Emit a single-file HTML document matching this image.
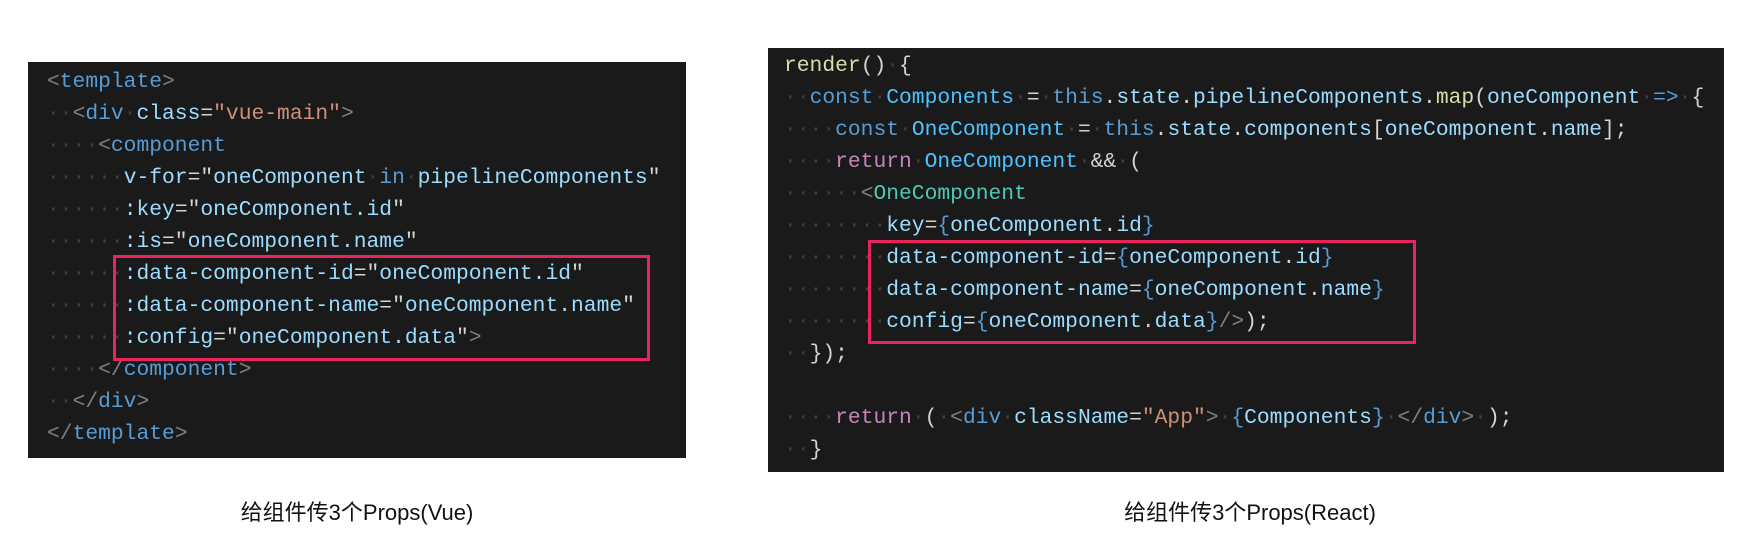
<!DOCTYPE html>
<html><head><meta charset="utf-8"><style>
html,body{margin:0;padding:0;background:#fff;width:1748px;height:558px;overflow:hidden;position:relative}
.panel{position:absolute;background:#1a1a1a}
.code{position:absolute;font-family:"Liberation Mono",monospace;font-size:21.3px;line-height:32px;white-space:normal;color:#d4d4d4}
.code div{height:32px;white-space:pre}
.d{color:#3e3e3e}
.g{color:#808080}
.t{color:#569cd6}
.a{color:#9cdcfe}
.s{color:#ce9178}
.k{color:#c586c0}
.f{color:#dcdcaa}
.c{color:#4ec9b0}
.v{color:#4fc1ff}
.b{color:#569cd6}
.w{color:#d4d4d4}
.box{position:absolute;border:3px solid #e8245f;box-sizing:border-box}
.cap{position:absolute;font-family:"Liberation Sans","Noto Sans CJK SC",sans-serif;font-size:22px;color:#111;transform:translateX(-50%);white-space:nowrap}
</style></head><body>
<div class="panel" style="left:28px;top:62px;width:658px;height:396px"></div>
<div class="code" style="left:47px;top:66px">
<div><span class="g">&lt;</span><span class="t">template</span><span class="g">&gt;</span></div>
<div><span class="d">··</span><span class="g">&lt;</span><span class="t">div</span><span class="d">·</span><span class="a">class</span><span class="w">=</span><span class="s">"vue-main"</span><span class="g">&gt;</span></div>
<div><span class="d">····</span><span class="g">&lt;</span><span class="t">component</span></div>
<div><span class="d">······</span><span class="a">v-for</span><span class="w">=</span><span class="w">"</span><span class="a">oneComponent</span><span class="d">·</span><span class="t">in</span><span class="d">·</span><span class="a">pipelineComponents</span><span class="w">"</span></div>
<div><span class="d">······</span><span class="a">:key</span><span class="w">="</span><span class="a">oneComponent.id</span><span class="w">"</span></div>
<div><span class="d">······</span><span class="a">:is</span><span class="w">="</span><span class="a">oneComponent.name</span><span class="w">"</span></div>
<div><span class="d">······</span><span class="a">:data-component-id</span><span class="w">="</span><span class="a">oneComponent.id</span><span class="w">"</span></div>
<div><span class="d">······</span><span class="a">:data-component-name</span><span class="w">="</span><span class="a">oneComponent.name</span><span class="w">"</span></div>
<div><span class="d">······</span><span class="a">:config</span><span class="w">="</span><span class="a">oneComponent.data</span><span class="w">"</span><span class="g">&gt;</span></div>
<div><span class="d">····</span><span class="g">&lt;/</span><span class="t">component</span><span class="g">&gt;</span></div>
<div><span class="d">··</span><span class="g">&lt;/</span><span class="t">div</span><span class="g">&gt;</span></div>
<div><span class="g">&lt;/</span><span class="t">template</span><span class="g">&gt;</span></div>
</div>
<div class="box" style="left:113px;top:255px;width:537px;height:106px"></div>

<div class="panel" style="left:768px;top:48px;width:956px;height:424px"></div>
<div class="code" style="left:784px;top:50px">
<div><span class="f">render</span><span class="w">()</span><span class="d">·</span><span class="w">{</span></div>
<div><span class="d">··</span><span class="b">const</span><span class="d">·</span><span class="v">Components</span><span class="d">·</span><span class="w">=</span><span class="d">·</span><span class="b">this</span><span class="w">.</span><span class="a">state</span><span class="w">.</span><span class="a">pipelineComponents</span><span class="w">.</span><span class="f">map</span><span class="w">(</span><span class="a">oneComponent</span><span class="d">·</span><span class="b">=&gt;</span><span class="d">·</span><span class="w">{</span></div>
<div><span class="d">····</span><span class="b">const</span><span class="d">·</span><span class="v">OneComponent</span><span class="d">·</span><span class="w">=</span><span class="d">·</span><span class="b">this</span><span class="w">.</span><span class="a">state</span><span class="w">.</span><span class="a">components</span><span class="w">[</span><span class="a">oneComponent</span><span class="w">.</span><span class="a">name</span><span class="w">];</span></div>
<div><span class="d">····</span><span class="k">return</span><span class="d">·</span><span class="v">OneComponent</span><span class="d">·</span><span class="w">&amp;&amp;</span><span class="d">·</span><span class="w">(</span></div>
<div><span class="d">······</span><span class="g">&lt;</span><span class="c">OneComponent</span></div>
<div><span class="d">········</span><span class="a">key</span><span class="w">=</span><span class="b">{</span><span class="a">oneComponent</span><span class="w">.</span><span class="a">id</span><span class="b">}</span></div>
<div><span class="d">········</span><span class="a">data-component-id</span><span class="w">=</span><span class="b">{</span><span class="a">oneComponent</span><span class="w">.</span><span class="a">id</span><span class="b">}</span></div>
<div><span class="d">········</span><span class="a">data-component-name</span><span class="w">=</span><span class="b">{</span><span class="a">oneComponent</span><span class="w">.</span><span class="a">name</span><span class="b">}</span></div>
<div><span class="d">········</span><span class="a">config</span><span class="w">=</span><span class="b">{</span><span class="a">oneComponent</span><span class="w">.</span><span class="a">data</span><span class="b">}</span><span class="g">/&gt;</span><span class="w">);</span></div>
<div><span class="d">··</span><span class="w">});</span></div>
<div></div>
<div><span class="d">····</span><span class="k">return</span><span class="d">·</span><span class="w">(</span><span class="d">·</span><span class="g">&lt;</span><span class="t">div</span><span class="d">·</span><span class="a">className</span><span class="w">=</span><span class="s">"App"</span><span class="g">&gt;</span><span class="d">·</span><span class="b">{</span><span class="a">Components</span><span class="b">}</span><span class="d">·</span><span class="g">&lt;/</span><span class="t">div</span><span class="g">&gt;</span><span class="d">·</span><span class="w">);</span></div>
<div><span class="d">··</span><span class="w">}</span></div>
</div>
<div class="box" style="left:868px;top:240px;width:548px;height:104px"></div>

<div class="cap" style="left:357px;top:495px">给组件传3个Props(Vue)</div>
<div class="cap" style="left:1250px;top:495px">给组件传3个Props(React)</div>
</body></html>
